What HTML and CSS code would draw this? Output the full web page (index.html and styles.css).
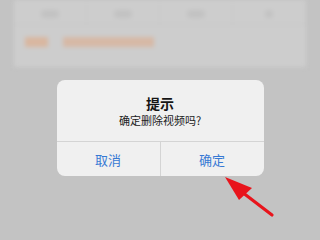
FILE: index.html
```html
<!DOCTYPE html>
<html lang="zh">
  <head>
    <meta charset="UTF-8" />
    <meta name="viewport" content="width=device-width, initial-scale=1.0" />
    <title>提示</title>
    <link rel="stylesheet" href="styles.css">
  </head>
  <body>
    <div class="wrapper">
      <!-- 뒤 배경 (흐릿하게) -->
      <div class="page">
        <div class="panel">
          <ul class="tabs">
            <li><span></span></li>
            <li><span></span></li>
            <li><span></span></li>
            <li><span class="small"></span></li>
          </ul>
          <div class="row">
            <span class="tag"></span>
            <span class="line"></span>
          </div>
        </div>
      </div>
      <!-- 모달 -->
      <div class="mask">
        <div class="dialog">
          <div class="body">
            <h3 class="title">提示</h3>
            <p class="msg">确定删除视频吗?</p>
          </div>
          <div class="btns">
            <a href="" class="btn">取消</a>
            <a href="" class="btn">确定</a>
          </div>
        </div>
      </div>
      <svg class="arrow" width="320" height="240" viewBox="0 0 320 240">
        <line x1="272" y1="215" x2="238" y2="189" stroke="#e8141c" stroke-width="3.2" stroke-linecap="round" />
        <polygon points="225,177 252,188 239,200" fill="#e8141c" />
      </svg>
    </div>
  </body>
</html>
```
FILE: styles.css
```css
* {
  box-sizing: border-box;
}
ul {
  list-style: none;
  margin: 0;
  padding: 0;
}
a {
  text-decoration: none;
}
body {
  margin: 0;
  font-family: "Noto Sans CJK SC", "Noto Sans", sans-serif;
}

.wrapper {
  width: 320px;
  height: 240px;
  background-color: #c3c3c3;
  overflow: hidden;
  position: relative;
}
.wrapper > .page {
  height: 100%;
  padding: 0 14px;
  filter: blur(2px);
}
.wrapper > .page > .panel {
  height: 67px;
  background-color: #cdcdcd;
  padding-top: 3px;
}
.wrapper > .page > .panel > ul.tabs {
  display: flex;
  height: 22px;
  border-bottom: 1px solid #c6c6c6;
}
.wrapper > .page > .panel > ul.tabs > li {
  flex: 1;
  display: flex;
  justify-content: center;
  align-items: center;
  border-right: 1px solid #c9c9c9;
}
.wrapper > .page > .panel > ul.tabs > li > span {
  width: 18px;
  height: 8px;
  background-color: #c2c2c2;
  border-radius: 4px;
}
.wrapper > .page > .panel > ul.tabs > li > span.small {
  width: 8px;
}
.wrapper > .page > .panel > .row {
  display: flex;
  align-items: center;
  gap: 15px;
  padding: 0 11px;
  height: 34px;
}
.wrapper > .page > .panel > .row > .tag {
  width: 23px;
  height: 10px;
  background-color: #d9b7a0;
}
.wrapper > .page > .panel > .row > .line {
  width: 91px;
  height: 10px;
  background-color: #d6b9a6;
}

.wrapper > .mask {
  position: absolute;
  left: 0;
  top: 0;
  width: 100%;
  height: 100%;
  display: flex;
  justify-content: center;
  align-items: flex-start;
  padding-top: 80px;
}
.wrapper > .mask > .dialog {
  width: 207px;
  background-color: #f0f0f0;
  border-radius: 8px;
  overflow: hidden;
}
.wrapper > .mask > .dialog > .body {
  padding: 14px 10px 13px;
  text-align: center;
  border-bottom: 1px solid #d4d4d4;
}
.wrapper > .mask > .dialog > .body > .title {
  margin: 0;
  font-size: 14px;
  line-height: 18px;
  font-weight: bold;
  color: #151515;
}
.wrapper > .mask > .dialog > .body > .msg {
  margin: 0;
  font-size: 11px;
  line-height: 16px;
  color: #222;
}
.wrapper > .mask > .dialog > .btns {
  display: flex;
  height: 34px;
}
.wrapper > .mask > .dialog > .btns > .btn {
  flex: 1;
  display: flex;
  justify-content: center;
  align-items: center;
  font-size: 13px;
  color: #3779d4;
}
.wrapper > .mask > .dialog > .btns > .btn + .btn {
  border-left: 1px solid #d4d4d4;
}

.wrapper > .arrow {
  position: absolute;
  left: 0;
  top: 0;
}
```
